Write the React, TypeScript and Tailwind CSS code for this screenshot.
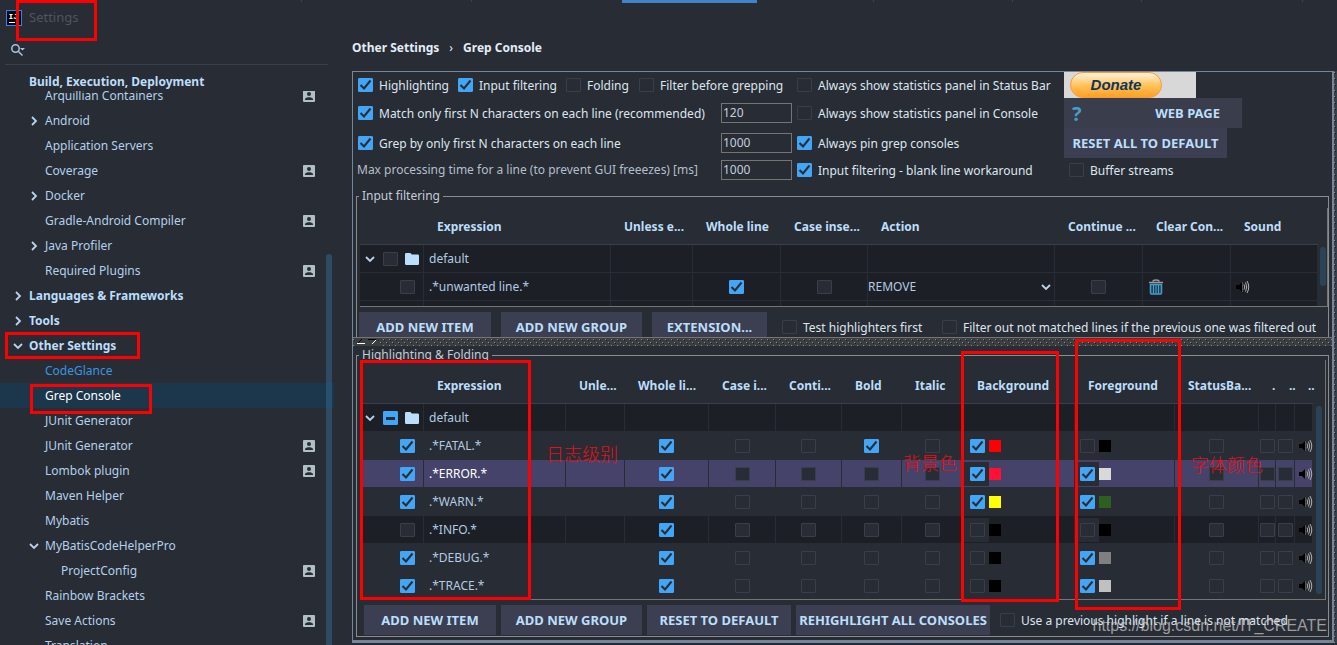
import type { ReactNode } from "react";
import clsx from "clsx";

type TreeItem = {
    label: string;
    level: 1 | 2 | 3;
    arrow?: "open" | "closed";
    project?: boolean;
    selected?: boolean;
    link?: boolean;
}

const treeItems: TreeItem[] = [
    { label: "Arquillian Containers", level: 2, project: true },
    { label: "Android", level: 2, arrow: "closed" },
    { label: "Application Servers", level: 2 },
    { label: "Coverage", level: 2, project: true },
    { label: "Docker", level: 2, arrow: "closed" },
    { label: "Gradle-Android Compiler", level: 2, project: true },
    { label: "Java Profiler", level: 2, arrow: "closed" },
    { label: "Required Plugins", level: 2, project: true },
    { label: "Languages & Frameworks", level: 1, arrow: "closed" },
    { label: "Tools", level: 1, arrow: "closed" },
    { label: "Other Settings", level: 1, arrow: "open" },
    { label: "CodeGlance", level: 2, link: true },
    { label: "Grep Console", level: 2, selected: true },
    { label: "JUnit Generator", level: 2 },
    { label: "JUnit Generator", level: 2, project: true },
    { label: "Lombok plugin", level: 2, project: true },
    { label: "Maven Helper", level: 2 },
    { label: "Mybatis", level: 2 },
    { label: "MyBatisCodeHelperPro", level: 2, arrow: "open" },
    { label: "ProjectConfig", level: 3, project: true },
    { label: "Rainbow Brackets", level: 2 },
    { label: "Save Actions", level: 2, project: true },
    { label: "Translation", level: 2 },
];

const filterColumns = [
    { title: "", width: "w-[64px]" },
    { title: "Expression", width: "w-[187px]" },
    { title: "Unless e...", width: "w-[82px]" },
    { title: "Whole line", width: "w-[88px]" },
    { title: "Case inse...", width: "w-[87px]" },
    { title: "Action", width: "" },
    { title: "Continue ...", width: "w-[88px]" },
    { title: "Clear Con...", width: "w-[88px]" },
    { title: "Sound", width: "w-[87px]" },
];

const highlightColumns = [
    { title: "", width: "w-[64px]" },
    { title: "Expression", width: "" },
    { title: "Unle...", width: "w-[59px]" },
    { title: "Whole li...", width: "w-[84px]" },
    { title: "Case i...", width: "w-[67px]" },
    { title: "Conti...", width: "w-[66px]" },
    { title: "Bold", width: "w-[60px]" },
    { title: "Italic", width: "w-[62px]" },
    { title: "Background", width: "w-[111px]" },
    { title: "Foreground", width: "w-[100px]" },
    { title: "StatusBa...", width: "w-[84px]" },
    { title: ".", width: "w-[17px]" },
    { title: "..", width: "w-[19px]" },
    { title: "..", width: "w-[18px]" },
];

const levels = [
    { name: ".*FATAL.*", on: true, bold: true, bg: true, bgColor: "bg-[#ff0000]", fg: false, fgColor: "bg-black", row: "" },
    { name: ".*ERROR.*", on: true, bold: false, bg: true, bgColor: "bg-[#ff1133]", fg: true, fgColor: "bg-[#d9d9d9]", row: "bg-[#45436a] text-white" },
    { name: ".*WARN.*", on: true, bold: false, bg: true, bgColor: "bg-[#ffff00]", fg: true, fgColor: "bg-[#2d5f1e]", row: "" },
    { name: ".*INFO.*", on: false, bold: false, bg: false, bgColor: "bg-black", fg: false, fgColor: "bg-black", row: "bg-[#1c1f26]" },
    { name: ".*DEBUG.*", on: true, bold: false, bg: false, bgColor: "bg-black", fg: true, fgColor: "bg-[#808080]", row: "" },
    { name: ".*TRACE.*", on: true, bold: false, bg: false, bgColor: "bg-black", fg: true, fgColor: "bg-[#c0c0c0]", row: "" },
];

const Chevron = ({ open, className }: { open?: boolean; className?: string }) => (
    <svg viewBox="0 0 10 10" className={clsx("size-[10px] shrink-0", className)} fill="none" stroke="#b9d3ee" strokeWidth="1.8">
        {open ? <path d="M1 3l4 4 4-4" /> : <path d="M3 1l4 4-4 4" />}
    </svg>
)

const FolderIcon = () => (
    <svg viewBox="0 0 14 12" className="h-[12px] w-[14px] shrink-0" fill="#bbdefb">
        <path d="M1.2 0h4.2l1.4 1.5h6a1.2 1.2 0 0 1 1.2 1.2v8.1a1.2 1.2 0 0 1-1.2 1.2H1.2A1.2 1.2 0 0 1 0 10.8V1.2A1.2 1.2 0 0 1 1.2 0z" />
    </svg>
)

const ProjectIcon = () => (
    <svg viewBox="0 0 12 12" className="size-[12px] shrink-0">
        <rect width="12" height="12" rx="1" fill="#b0bec5" />
        <circle cx="6" cy="4" r="2" fill="#282c34" />
        <path d="M2 10V9.2C2 7.8 4.5 7.2 6 7.2s4 .6 4 2V10z" fill="#282c34" />
    </svg>
)

const SoundIcon = () => (
    <svg viewBox="0 0 14 14" className="block h-[14px] w-[14px] shrink-0" fill="none">
        <path d="M0 5h3l3.5-3.5v11L3 9H0z" fill="#000" />
        <path d="M6.5 2v10" stroke="#555" />
        <path d="M8 4.5q1.5 2.5 0 5M9.5 2.500q2.500 4.500 0 9M11 1q3.500 6 0 12" stroke="#b0b0b0" />
    </svg>
)

const TrashIcon = () => (
    <svg viewBox="0 0 14 16" className="block h-[16px] w-[14px]" fill="none">
        <path d="M0 3.5h14M4 2.5q0-1.500 3-1.500t3 1.500" stroke="#9a9a9a" strokeWidth="1.5" />
        <path d="M1.5 5.5h11v8.500q0 1-1 1h-9q-1 0-1-1z" fill="#1d4560" stroke="#4a9cc4" strokeWidth="1.5" />
        <path d="M4.5 5.5v9M7 5.5v9M9.5 5.5v9" stroke="#4a9cc4" />
    </svg>
)

type CheckProps = { checked?: boolean; partial?: boolean; name?: string; children?: ReactNode; className?: string }

const Check = ({ checked, partial, name, children, className }: CheckProps) => (
    <label className={clsx("inline-flex items-center gap-[6px] whitespace-nowrap", className)}>
        <span className="grid h-[14px] w-[15px] shrink-0">
            <input
                type="checkbox"
                defaultChecked={checked || partial}
                aria-label={name}
                className="peer col-start-1 row-start-1 h-[14px] w-[15px] appearance-none rounded-[1px] border border-[#3a3e4b] bg-[#282c34] checked:border-[#42a5f5] checked:bg-[#42a5f5]"
            />
            <svg viewBox="0 0 15 14" className="pointer-events-none col-start-1 row-start-1 hidden h-[14px] w-[15px] peer-checked:block" fill="none" stroke="#282c34" strokeWidth="2">
                {partial ? <path d="M3 7.5h9" strokeWidth="3" /> : <path d="M2.500 7l3.500 3.500 6.500-8" />}
            </svg>
        </span>
        {children && <span className="pt-[2px]">{children}</span>}
    </label>
)

const Button = ({ children, className }: { children: ReactNode; className?: string }) => (
    <button type="button" className={clsx("h-[30px] shrink-0 whitespace-nowrap bg-[#3c3f52] pt-[2px] text-center text-[13px] font-bold text-[#bbdefb]", className)}>
        {children}
    </button>
)

const NumberField = ({ id, value, label }: { id: string; value: string; label?: string }) => (
    <input
        id={id}
        aria-label={label}
        defaultValue={value}
        className="ml-auto h-[20px] w-[71px] border border-[#757575] bg-transparent px-px pb-px text-[#c5cfdc]"
    />
)

type Column = { title: string; width: string }

const TableHead = ({ columns, className }: { columns: Column[]; className: string }) => (
    <>
        <colgroup>
            {columns.map((col, index) => <col key={index} className={col.width} />)}
        </colgroup>
        <thead>
            <tr className={className}>
                {columns.map((col, index) => (
                    <th key={index} className="border-b border-[#3a3f4b] pt-[2px] pl-[13px] text-left font-bold whitespace-nowrap text-[#bbdefb]">
                        {col.title}
                    </th>
                ))}
            </tr>
        </thead>
    </>
)

const Cell = ({ children, className }: { children?: ReactNode; className?: string }) => (
    <td className={clsx("h-[28px] border-r border-b border-[#282c34] p-0", className)}>
        <div className="flex items-center">{children}</div>
    </td>
)

const CheckCell = ({ name, checked }: { name: string; checked?: boolean }) => (
    <td className="h-[28px] border-r border-b border-[#282c34] p-0">
        <div className="flex justify-center"><Check name={name} checked={checked} /></div>
    </td>
)

const ColorCell = ({ name, checked, color, pad }: { name: string; checked: boolean; color: string; pad: string }) => (
    <Cell>
        <div className={clsx("flex h-[24px] items-center bg-[#282c34]", pad)}><Check name={name} checked={checked} /></div>
        <div className={clsx("size-[12px]", color)}></div>
    </Cell>
)

const GroupCells = ({ partial }: { partial?: boolean }) => (
    <>
        <Cell className="pl-[5px]">
            <Chevron open />
            <Check name="default group" partial={partial} className="ml-[8px]" />
            <span className="ml-[7px]"><FolderIcon /></span>
        </Cell>
        <Cell className="pl-[5px]">default</Cell>
    </>
)

// speckled bar used between the resizable panes
const Grip = ({ id, className }: { id: string; className: string }) => (
    <svg className={clsx("block bg-[#3c3f41]", className)}>
        <defs>
            <pattern id={id} width="6" height="6" patternUnits="userSpaceOnUse">
                <rect x="0" y="1" width="1" height="1" fill="#8b8e90" />
                <rect x="1" y="2" width="1" height="1" fill="#1d1e1f" />
                <rect x="3" y="4" width="1" height="1" fill="#8b8e90" />
                <rect x="4" y="5" width="1" height="1" fill="#1d1e1f" />
            </pattern>
        </defs>
        <rect width="100%" height="100%" fill={`url(#${id})`} />
    </svg>
)

const Sidebar = () => (
    <aside className="flex h-full w-[334px] shrink-0 flex-col text-[#b3d0ec]">
        <div className="flex h-[36px] shrink-0 items-center gap-[7px] pl-[6px] text-[13px] text-[#50555f]">
            <svg viewBox="0 0 16 16" className="size-[16px]">
                <rect x=".5" y=".5" width="15" height="15" fill="#000" stroke="#1e88ff" />
                <text x="2.5" y="9" fill="#fff" fontSize="8" fontWeight="bold" fontFamily="Liberation Mono, monospace">IJ</text>
                <rect x="3" y="12" width="6" height="1" fill="#fff" />
            </svg>
            Settings
        </div>
        <div className="mr-[6px] ml-[5px] flex h-[29px] shrink-0 items-center border-b border-[#3a3f4e] pl-[6px]">
            <svg viewBox="0 0 14 12" className="h-[12px] w-[14px]" fill="none" stroke="#a9c3de" strokeWidth="1.5">
                <circle cx="4.5" cy="4.5" r="3.7" />
                <path d="M7.5 7.500l4 4" />
                <path d="M9 4h5l-2.500 2.500z" fill="#a9c3de" stroke="none" />
            </svg>
        </div>
        <div className="h-[26px] shrink-0 pt-[8px] pl-[29px] leading-[18px] font-bold text-[#bbdefb]">Build, Execution, Deployment</div>
        <div className="flex min-h-0 flex-1 overflow-hidden">
            <ul className="-mt-[8px] -mr-[8px] flex-1">
                {treeItems.map((item, index) => (
                    <li
                        key={index}
                        className={clsx(
                            "flex h-[25px] items-center gap-[6px] pr-[19px]",
                            item.level === 1 && "pl-[13px] font-bold text-[#bbdefb]",
                            item.level === 2 && "pl-[29px]",
                            item.level === 3 && "pl-[45px]",
                            item.selected && "bg-[#1c364c] text-white",
                            item.link && "text-[#3d94e0]"
                        )}
                    >
                        {item.arrow ? <Chevron open={item.arrow === "open"} /> : <span className="w-[10px]"></span>}
                        <span className="flex-1">{item.label}</span>
                        {item.project && <ProjectIcon />}
                    </li>
                ))}
            </ul>
            <div className="relative mt-[163px] mr-[2px] w-[6px] rounded-t-full bg-[#35658a]/55"></div>
        </div>
    </aside>
)

const Options = () => (
    <div className="grid h-[111px] grid-cols-[444px_267px_1fr] grid-rows-[26px_30px_30px_24px] items-center text-[#dde6f0]">
        <div className="flex pl-[5px]">
            <Check checked className="w-[100px]">Highlighting</Check>
            <Check checked className="w-[108px]">Input filtering</Check>
            <Check className="w-[73px]">Folding</Check>
            <Check>Filter before grepping</Check>
        </div>
        <Check>Always show statistics panel in Status Bar</Check>
        <button type="button" className="flex h-[26px] w-[132px] items-center bg-[#d8d8d8] pl-[6px]">
            <span className="h-[26px] w-[92px] rounded-full border border-[#ff9933] bg-linear-to-b from-[#fff3dc] via-[#ffc35a] via-50% to-[#ffa01e] text-center font-['Liberation_Sans',sans-serif] text-[15px] leading-[24px] font-bold text-[#0b3564] italic">Donate</span>
        </button>

        <div className="flex items-center pr-[5px] pl-[5px]">
            <Check checked>Match only first N characters on each line (recommended)</Check>
            <NumberField id="match-limit" value="120" label="Match limit" />
        </div>
        <Check>Always show statistics panel in Console</Check>
        <button type="button" className="flex h-[30px] w-[178px] items-center bg-[#3a3d4c] pt-[2px] pr-[22px] pl-[8px] text-[13px] font-bold text-[#bbdefb]">
            <span className="text-[20px] leading-[20px] text-[#479cc6]">?</span>
            <span className="ml-auto">WEB PAGE</span>
        </button>

        <div className="flex items-center pr-[5px] pl-[5px]">
            <Check checked>Grep by only first N characters on each line</Check>
            <NumberField id="grep-limit" value="1000" label="Grep limit" />
        </div>
        <Check checked>Always pin grep consoles</Check>
        <Button className="w-[163px]">RESET ALL TO DEFAULT</Button>

        <div className="flex items-center pr-[5px] pl-[4px]">
            <label htmlFor="max-time" className="text-[#b4bfcc]">Max processing time for a line (to prevent GUI freeezes) [ms]</label>
            <NumberField id="max-time" value="1000" />
        </div>
        <Check checked>Input filtering - blank line workaround</Check>
        <Check className="pl-[5px]">Buffer streams</Check>
    </div>
)

const InputFiltering = () => (
    <div className="h-[154px] overflow-hidden px-[3px] pt-[4px]">
        <fieldset className="border border-[#8c8c8c]">
            <legend className="ml-[2px] px-[3px] leading-[18px] text-[#c3ccd6]">Input filtering</legend>
            <div className="mt-[3px] ml-[3px] flex h-[99px] overflow-hidden border-b border-[#757575]">
                <div className="min-w-0 flex-1">
                    <table className="w-full table-fixed border-separate border-spacing-0 text-[#b3cbe3]">
                        <TableHead columns={filterColumns} className="h-[37px]" />
                        <tbody className="bg-[#1c1f26]">
                            <tr>
                                <GroupCells />
                                {filterColumns.slice(2).map((col) => <Cell key={col.title} />)}
                            </tr>
                            <tr>
                                <Cell className="pl-[40px]"><Check name="Enable unwanted line" /></Cell>
                                <Cell className="pl-[5px]">.*unwanted line.*</Cell>
                                <Cell />
                                <CheckCell name="Whole line" checked />
                                <CheckCell name="Case insensitive" />
                                <Cell>
                                    <select aria-label="Action" className="min-w-0 flex-1 appearance-none bg-transparent">
                                        <option>REMOVE</option>
                                    </select>
                                    <Chevron open className="mr-[3px]" />
                                </Cell>
                                <CheckCell name="Continue matching" />
                                <Cell className="pl-[6px]"><button type="button" aria-label="Clear console"><TrashIcon /></button></Cell>
                                <Cell className="pl-[5px]"><button type="button" aria-label="Sound"><SoundIcon /></button></Cell>
                            </tr>
                            <tr>
                                {filterColumns.map((col) => <Cell key={col.title} />)}
                            </tr>
                        </tbody>
                    </table>
                </div>
                <div className="w-[10px] shrink-0 border-r border-[#757575] pt-[39px] pl-[2px]">
                    <div className="h-[39px] w-[6px] rounded-full bg-[#2b4257]"></div>
                </div>
            </div>
            <div className="mt-[5px] ml-[2px] flex gap-[10px] text-[#dde6f0]">
                <Button className="w-[132px]">ADD NEW ITEM</Button>
                <Button className="w-[141px]">ADD NEW GROUP</Button>
                <Button className="w-[115px]">EXTENSION...</Button>
                <Check className="w-[155px] pl-[5px]">Test highlighters first</Check>
                <Check>Filter out not matched lines if the previous one was filtered out</Check>
            </div>
        </fieldset>
    </div>
)

const Highlighting = () => (
    <div className="px-[3px] pb-[3px]">
        <fieldset className="border border-[#8c8c8c] pb-px">
            <legend className="ml-[2px] px-[3px] leading-[18px] text-[#c3ccd6]">Highlighting &amp; Folding</legend>
            <div className="relative -mt-[4px] mr-[2px] ml-[3px] flex h-[240px] overflow-hidden border-r border-b border-[#757575] bg-[#282c34]">
                <div className="min-w-0 flex-1">
                    <table className="w-full table-fixed border-separate border-spacing-0 text-[#b3cbe3]">
                        <TableHead columns={highlightColumns} className="h-[44px] *:pt-[9px]" />
                        <tbody>
                            <tr className="bg-[#1c1f26]">
                                <GroupCells partial />
                                {highlightColumns.slice(2).map((col, index) => <Cell key={index} />)}
                            </tr>
                            {levels.map((level) => (
                                <tr key={level.name} className={level.row}>
                                    <Cell className="pl-[40px]"><Check name={"Enable " + level.name} checked={level.on} /></Cell>
                                    <Cell className="pl-[5px]">{level.name}</Cell>
                                    <Cell />
                                    <CheckCell name="Whole line" checked />
                                    <CheckCell name="Case insensitive" />
                                    <CheckCell name="Continue matching" />
                                    <CheckCell name="Bold" checked={level.bold} />
                                    <CheckCell name="Italic" />
                                    <ColorCell name="Background" checked={level.bg} color={level.bgColor} pad="pr-[4px] pl-[6px]" />
                                    <ColorCell name="Foreground" checked={level.fg} color={level.fgColor} pad="pr-[4px] pl-[5px]" />
                                    <CheckCell name="Status bar count" />
                                    <CheckCell name="Console count" />
                                    <CheckCell name="Fold" />
                                    <Cell className="pl-[4px]"><button type="button" aria-label="Sound"><SoundIcon /></button></Cell>
                                </tr>
                            ))}
                        </tbody>
                    </table>
                </div>
                <div className="w-[12px] shrink-0 pt-[46px] pl-[3px]">
                    <div className="h-[188px] w-[6px] rounded-full bg-[#2b4257]"></div>
                </div>
            </div>
            <div className="mt-[5px] ml-[7px] flex gap-[5px] text-[#dde6f0]">
                <Button className="w-[132px]">ADD NEW ITEM</Button>
                <Button className="w-[141px]">ADD NEW GROUP</Button>
                <Button className="w-[144px]">RESET TO DEFAULT</Button>
                <Button className="w-[194px]">REHIGHLIGHT ALL CONSOLES</Button>
                <Check className="pl-[5px]">Use a previous highlight if a line is not matched</Check>
            </div>
        </fieldset>
    </div>
)

const App = () => {
    return (
        <div className="relative flex h-screen overflow-hidden bg-[#282c34] font-['Noto_Sans','Noto_Sans_CJK_SC',sans-serif] text-[12px]">
            <Sidebar />
            <main className="flex min-w-0 flex-1 flex-col pl-[18px]">
                <h1 className="flex h-[71px] shrink-0 gap-[10px] pt-[39px] leading-[18px] font-bold text-[#e3edf8]">
                    <span>Other Settings</span>
                    <span className="font-normal">›</span>
                    <span>Grep Console</span>
                </h1>
                <div className="flex">
                    <div className="min-w-0 flex-1 border-t border-r-2 border-b-3 border-l border-[#76869a]">
                        <Options />
                        <InputFiltering />
                        <div className="relative border-t border-[#757575]">
                            <Grip id="grip-h" className="h-[8px] w-full" />
                            <svg viewBox="0 0 22 8" className="absolute top-0 left-[3px] h-[8px] w-[22px] bg-[#3c3f41]" fill="none">
                                <path d="M2 5l4-4" stroke="#000" />
                                <path d="M1 5.5h8" stroke="#fff" />
                                <path d="M12 1.500h8" stroke="#000" />
                                <path d="M20 2l-4 4" stroke="#fff" />
                            </svg>
                        </div>
                        <Highlighting />
                    </div>
                    <Grip id="grip-v" className="h-auto w-[3px]" />
                </div>
            </main>

            {/* editor tabs peeking out above the dialog */}
            <div className="absolute top-0 left-[622px] h-[3px] w-[135px] bg-[#4083c9]"></div>
            <div className="absolute top-0 left-[301px] h-[2px] w-px bg-[#3d424d]"></div>
            <div className="absolute top-0 left-[471px] h-[2px] w-px bg-[#3d424d]"></div>
            <div className="absolute top-0 left-[873px] h-[2px] w-px bg-[#3d424d]"></div>
            <div className="absolute top-0 left-[1012px] h-[2px] w-px bg-[#3d424d]"></div>
            <div className="absolute top-0 left-[1141px] h-[2px] w-px bg-[#3d424d]"></div>
            <div className="absolute top-0 left-[1302px] h-[2px] w-px bg-[#3d424d]"></div>

            {/* red markers and notes */}
            <div className="pointer-events-none absolute inset-0 text-[18px] leading-[18px] text-[#e0121b]">
                <div className="absolute top-0 left-[16px] h-[41px] w-[81px] border-3 border-[#ff0000]"></div>
                <div className="absolute top-[332px] left-[5px] h-[27px] w-[135px] border-3 border-[#ff0000]"></div>
                <div className="absolute top-[384px] left-[30px] h-[30px] w-[122px] border-3 border-[#ff0000]"></div>
                <div className="absolute top-[360px] left-[360px] h-[240px] w-[171px] border-3 border-[#ff0000]"></div>
                <div className="absolute top-[351px] left-[961px] h-[251px] w-[98px] border-3 border-[#ff0000]"></div>
                <div className="absolute top-[339px] left-[1075px] h-[271px] w-[106px] border-3 border-[#ff0000]"></div>
                <p className="absolute top-[445px] left-[546px] font-light">日志级别</p>
                <p className="absolute top-[454px] left-[903px] font-light">背景色</p>
                <p className="absolute top-[456px] left-[1191px] font-light">字体颜色</p>
            </div>
            <p className="pointer-events-none absolute right-[10px] bottom-[8px] font-['Liberation_Sans',sans-serif] text-[16px] leading-[22px] text-[#d0d0d0]/70">https://blog.csdn.net/IT_CREATE</p>
        </div>
    )
}

export default App
